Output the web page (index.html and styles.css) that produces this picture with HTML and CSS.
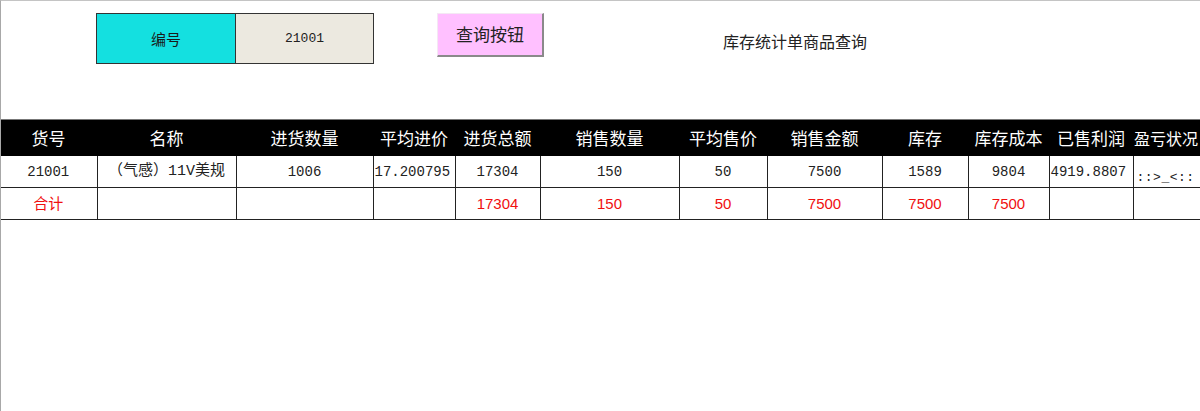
FILE: index.html
```html
<!DOCTYPE html>
<html lang="zh-CN">
<head>
<meta charset="utf-8">
<title>库存统计单商品查询</title>
<link rel="stylesheet" href="styles.css">
</head>
<body>
<div class="page">
  <div class="topbar">
    <div class="field">
      <div class="field-label">编号</div>
      <div class="field-value">21001</div>
    </div>
    <div class="query-btn">查询按钮</div>
    <div class="title">库存统计单商品查询</div>
  </div>
  <table class="grid">
    <colgroup>
      <col class="c1"><col class="c2"><col class="c3"><col class="c4"><col class="c5"><col class="c6">
      <col class="c7"><col class="c8"><col class="c9"><col class="c10"><col class="c11"><col class="c12">
    </colgroup>
    <thead>
      <tr>
        <th>货号</th><th>名称</th><th>进货数量</th><th>平均进价</th><th>进货总额</th><th>销售数量</th>
        <th>平均售价</th><th>销售金额</th><th>库存</th><th>库存成本</th><th>已售利润</th><th class="left">盈亏状况</th>
      </tr>
    </thead>
    <tbody>
      <tr class="data">
        <td>21001</td><td class="name">（气感）11V美规</td><td>1006</td><td class="tight">17.200795</td><td>17304</td><td>150</td>
        <td>50</td><td>7500</td><td>1589</td><td>9804</td><td class="tight">4919.8807</td><td class="status">::&gt;_&lt;::</td>
      </tr>
      <tr class="total">
        <td>合计</td><td></td><td></td><td></td><td>17304</td><td>150</td>
        <td>50</td><td>7500</td><td>7500</td><td>7500</td><td></td><td></td>
      </tr>
    </tbody>
  </table>
</div>
</body>
</html>
```

FILE: styles.css
```css
html, body {
  margin: 0;
  padding: 0;
  background: #ffffff;
  overflow: hidden;
}

.page {
  width: 1200px;
  height: 411px;
  box-sizing: border-box;
  border-top: 1px solid #c4c4c4;
  border-left: 1px solid #a8a8a8;
  font-family: "Noto Sans CJK SC", "Liberation Sans", sans-serif;
  color: #222;
  overflow: hidden;
}

.topbar {
  display: flex;
  align-items: flex-start;
  height: 118px;
  padding-top: 12px;
  box-sizing: border-box;
}

.field {
  display: flex;
  margin-left: 95px;
  height: 51px;
  border: 1px solid #333;
  box-sizing: border-box;
}

.field-label {
  width: 138px;
  background: #14e0e0;
  border-right: 1px solid #333;
  display: flex;
  align-items: center;
  justify-content: center;
  font-size: 15px;
  color: #1a1a1a;
}

.field-value {
  width: 137px;
  background: #ece9e0;
  display: flex;
  align-items: center;
  justify-content: center;
  font-family: "Liberation Mono", "Noto Sans CJK SC", monospace;
  font-size: 13px;
  color: #222;
}

.query-btn {
  margin-left: 63px;
  width: 107px;
  height: 44px;
  box-sizing: border-box;
  background: #ffc0ff;
  border-top: 1px solid #f4e8f4;
  border-left: 1px solid #f4e8f4;
  border-right: 2px solid #8a8a8a;
  border-bottom: 2px solid #8a8a8a;
  display: flex;
  align-items: center;
  justify-content: center;
  font-size: 17px;
  color: #222;
  padding-bottom: 3px;
}

.title {
  margin-left: 179px;
  margin-top: 17px;
  font-size: 16px;
  line-height: 22px;
  color: #222;
}

.grid {
  border-collapse: collapse;
  table-layout: fixed;
  width: 1266px;
  margin-left: -1px;
  border-top: 1px solid #777;
}

.c1 { width: 97px; }
.c2 { width: 139px; }
.c3 { width: 137px; }
.c4 { width: 82px; }
.c5 { width: 85px; }
.c6 { width: 139px; }
.c7 { width: 88px; }
.c8 { width: 115px; }
.c9 { width: 86px; }
.c10 { width: 81px; }
.c11 { width: 84px; }
.c12 { width: 133px; }

.grid th {
  background: #000;
  color: #fff;
  height: 36px;
  padding: 0;
  font-weight: normal;
  font-size: 17px;
  line-height: 20px;
  text-align: center;
  white-space: nowrap;
  overflow: hidden;
}

.grid th.left {
  text-align: left;
  padding-left: 1px;
  font-size: 16px;
}

.grid td {
  height: 31px;
  padding: 0;
  line-height: 18px;
  text-align: center;
  white-space: nowrap;
  overflow: hidden;
  border-left: 1px solid #222;
  border-bottom: 1px solid #222;
}

.grid td:first-child {
  border-left: none;
}

.data td {
  font-family: "Liberation Mono", "Noto Sans CJK SC", monospace;
  font-size: 14px;
  color: #222;
}

.data td.name {
  font-size: 15px;
}

.data td.tight {
  padding-left: 1px;
  text-align: left;
}

.data td.status {
  text-align: left;
  vertical-align: bottom;
  padding-left: 3px;
  padding-bottom: 2px;
  line-height: 14px;
  height: 29px;
  font-size: 13px;
  letter-spacing: 0.5px;
}

.total td {
  font-family: "Liberation Sans", "Noto Sans CJK SC", sans-serif;
  font-size: 15px;
  color: #f01010;
}
```
